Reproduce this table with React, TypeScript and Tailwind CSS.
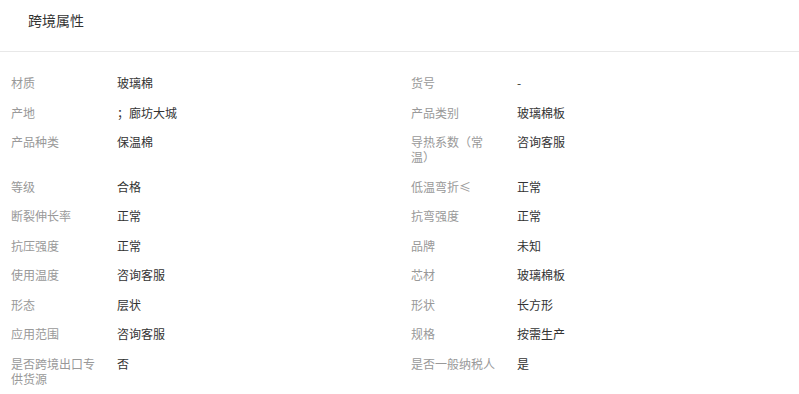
const rows: [string, string, string, string][] = [
  ["材质", "玻璃棉", "货号", "-"],
  ["产地", "；廊坊大城", "产品类别", "玻璃棉板"],
  ["产品种类", "保温棉", "导热系数（常温）", "咨询客服"],
  ["等级", "合格", "低温弯折≤", "正常"],
  ["断裂伸长率", "正常", "抗弯强度", "正常"],
  ["抗压强度", "正常", "品牌", "未知"],
  ["使用温度", "咨询客服", "芯材", "玻璃棉板"],
  ["形态", "层状", "形状", "长方形"],
  ["应用范围", "咨询客服", "规格", "按需生产"],
  ["是否跨境出口专供货源", "否", "是否一般纳税人", "是"],
];

const Cell = ({ label, value }: { label: string; value: string }) => (
  <div className="flex pb-[14.5px] pl-[11px] text-[12px] leading-[15px]">
    <div className="mr-[16px] w-[90px] shrink-0 text-[#999999]">{label}</div>
    <div className="text-[#333333]">{value}</div>
  </div>
);

export default function App() {
  return (
    <div
      className="h-[394px] w-[799px] bg-white"
      style={{ fontFamily: '"Noto Sans CJK SC", "Noto Sans", sans-serif' }}
    >
      <div className="h-[52px] border-b border-[#e8e8e8] pl-[28px] pt-[10px] text-[14px] leading-[20px] text-[#333333]">
        跨境属性
      </div>
      <div className="grid grid-cols-[400px_1fr] pt-[23px]">
        {rows.map(([l1, v1, l2, v2]) => (
          <div key={l1} className="contents">
            <Cell label={l1} value={v1} />
            <Cell label={l2} value={v2} />
          </div>
        ))}
      </div>
    </div>
  );
}
